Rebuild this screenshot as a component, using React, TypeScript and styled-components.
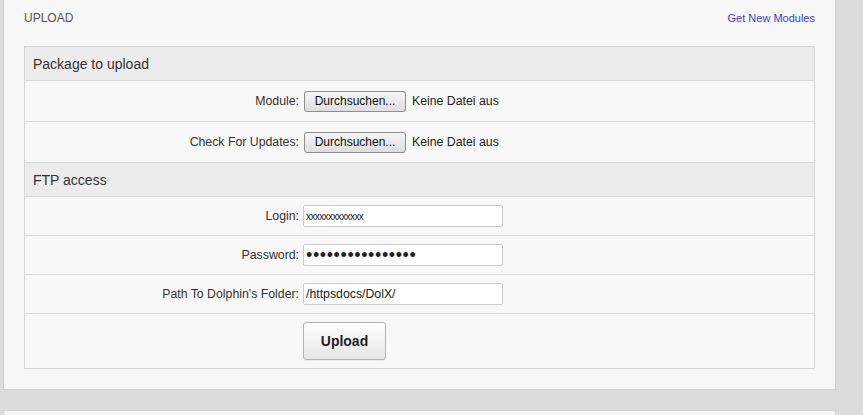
import React from 'react';
import styled, { createGlobalStyle } from 'styled-components';

const GlobalStyle = createGlobalStyle`
  html, body {
    margin: 0;
    padding: 0;
    background: #dcdcdc;
    font-family: 'Liberation Sans', Arial, sans-serif;
  }
`;

const Page = styled.div`
  padding: 0 27px 0 3px;
  height: 415px;
  overflow: hidden;
`;

const Box = styled.div`
  background: #f7f7f7;
  border: 1px solid #d0d0d0;
  border-top: none;
  padding: 0 20px 20px;
`;

const NextBox = styled(Box)`
  margin-top: 20px;
  border-top: 1px solid #d0d0d0;
  height: 40px;
`;

const TitleBar = styled.div`
  display: flex;
  justify-content: space-between;
  align-items: center;
  height: 46px;
`;

const Title = styled.span`
  font-size: 12px;
  color: #555;
  margin-top: -10px;
`;

const ModulesLink = styled.a`
  font-size: 11px;
  color: #3c3ccf;
  text-decoration: none;
  margin-top: -10px;
  cursor: pointer;
`;

const Table = styled.div`
  border: 1px solid #d6d6d6;
  background: #f8f8f8;
`;

const Header = styled.div`
  height: 33px;
  display: flex;
  align-items: center;
  padding-left: 8px;
  background: #ececec;
  font-size: 14px;
  color: #333;
  border-bottom: 1px solid #d9d9d9;
`;

const Row = styled.div<{ $height: number }>`
  display: grid;
  grid-template-columns: 274px 1fr;
  column-gap: 4px;
  align-items: center;
  height: ${({ $height }) => $height}px;
  border-bottom: 1px solid #d9d9d9;
  &:last-child {
    border-bottom: none;
  }
`;

const Label = styled.label`
  text-align: right;
  font-size: 12.3px;
  color: #333;
`;

const FileField = styled.div`
  display: flex;
  align-items: center;
  gap: 6px;
  font-size: 12.3px;
  color: #222;
`;

const FileButton = styled.button`
  height: 21px;
  width: 102px;
  padding: 0;
  margin-left: 1px;
  font-family: 'Liberation Sans', Arial, sans-serif;
  font-size: 12px;
  color: #111;
  border: 1px solid #8e8e8e;
  border-radius: 3px;
  background: linear-gradient(#f6f6f6, #dedede);
`;

const TextInput = styled.input<{ $variant?: 'small' | 'dots' }>`
  box-sizing: border-box;
  width: 200px;
  height: 22px;
  padding: 0 2px;
  border: 1px solid #cccccc;
  border-radius: 2px;
  background: #fff;
  font-family: 'Liberation Sans', Arial, sans-serif;
  font-size: ${({ $variant }) =>
    $variant === 'small' ? '10px' : $variant === 'dots' ? '18px' : '12.3px'};
  letter-spacing: ${({ $variant }) =>
    $variant === 'small' ? '-0.6px' : $variant === 'dots' ? '0.6px' : '0'};
  color: #222;
  outline: none;
`;

const UploadButton = styled.button`
  width: 83px;
  height: 38px;
  padding: 0;
  font-family: 'Liberation Sans', Arial, sans-serif;
  font-size: 14px;
  font-weight: bold;
  color: #222;
  border: 1px solid #b3b3b3;
  border-radius: 3px;
  background: linear-gradient(#ffffff, #e6e6e6);
  box-shadow: 0 1px 1px rgba(0, 0, 0, 0.06);
`;

const files = ['Module', 'Check For Updates'];

export default function App() {
  return (
    <>
      <GlobalStyle />
      <Page>
        <Box>
          <TitleBar>
            <Title>UPLOAD</Title>
            <ModulesLink>Get New Modules</ModulesLink>
          </TitleBar>
          <Table>
            <Header>Package to upload</Header>
            {files.map((f) => (
              <Row key={f} $height={40}>
                <Label>{f}:</Label>
                <FileField>
                  <FileButton type="button">Durchsuchen...</FileButton>
                  <span>Keine Datei aus</span>
                </FileField>
              </Row>
            ))}
            <Header>FTP access</Header>
            <Row $height={38}>
              <Label>Login:</Label>
              <div>
                <TextInput $variant="small" defaultValue="xxxxxxxxxxxxx" />
              </div>
            </Row>
            <Row $height={38}>
              <Label>Password:</Label>
              <div>
                <TextInput $variant="dots" type="password" defaultValue="xxxxxxxxxxxxxxxx" />
              </div>
            </Row>
            <Row $height={38}>
              <Label>Path To Dolphin's Folder:</Label>
              <div>
                <TextInput defaultValue="/httpsdocs/DolX/" />
              </div>
            </Row>
            <Row $height={54}>
              <span />
              <div>
                <UploadButton type="button">Upload</UploadButton>
              </div>
            </Row>
          </Table>
        </Box>
        <NextBox />
      </Page>
    </>
  );
}
